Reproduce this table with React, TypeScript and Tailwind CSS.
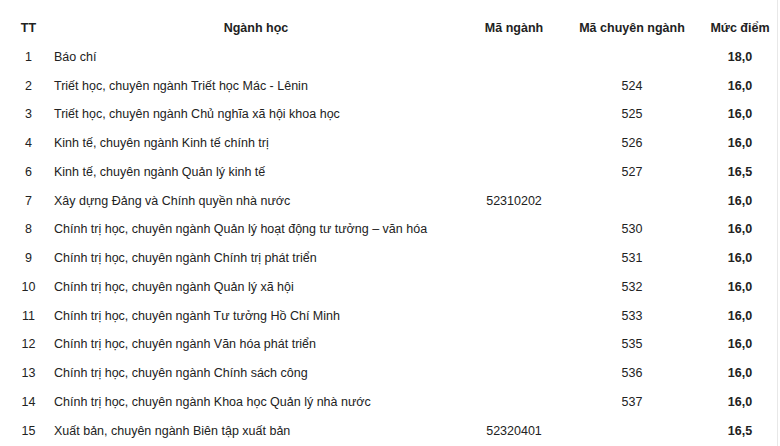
const rows: [string, string, string, string, string][] = [
  ['1', 'Báo chí', '', '', '18,0'],
  ['2', 'Triết học, chuyên ngành Triết học Mác - Lênin', '', '524', '16,0'],
  ['3', 'Triết học, chuyên ngành Chủ nghĩa xã hội khoa học', '', '525', '16,0'],
  ['4', 'Kinh tế, chuyên ngành Kinh tế chính trị', '', '526', '16,0'],
  ['6', 'Kinh tế, chuyên ngành Quản lý kinh tế', '', '527', '16,5'],
  ['7', 'Xây dựng Đảng và Chính quyền nhà nước', '52310202', '', '16,0'],
  ['8', 'Chính trị học, chuyên ngành Quản lý hoạt động tư tưởng – văn hóa', '', '530', '16,0'],
  ['9', 'Chính trị học, chuyên ngành Chính trị phát triển', '', '531', '16,0'],
  ['10', 'Chính trị học, chuyên ngành Quản lý xã hội', '', '532', '16,0'],
  ['11', 'Chính trị học, chuyên ngành Tư tưởng Hồ Chí Minh', '', '533', '16,0'],
  ['12', 'Chính trị học, chuyên ngành Văn hóa phát triển', '', '535', '16,0'],
  ['13', 'Chính trị học, chuyên ngành Chính sách công', '', '536', '16,0'],
  ['14', 'Chính trị học, chuyên ngành Khoa học Quản lý nhà nước', '', '537', '16,0'],
  ['15', 'Xuất bản, chuyên ngành Biên tập xuất bản', '52320401', '', '16,5'],
];

export default function App() {
  return (
    <div className="w-[780px] h-[446px] overflow-hidden bg-white font-['Liberation_Sans',Arial,sans-serif] text-[12.5px] text-[#222]">
      <div className="w-[778px] h-full border-r border-[#e8e8e8] pt-[14px]">
        <table className="table-fixed border-collapse w-[777px]">
          <colgroup>
            <col className="w-[49px]" />
            <col className="w-[414px]" />
            <col className="w-[102px]" />
            <col className="w-[134px]" />
            <col className="w-[78px]" />
          </colgroup>
          <thead>
            <tr className="h-[28.75px] font-bold">
              <th className="pl-2 text-center p-0">TT</th>
              <th className="text-center p-0">Ngành học</th>
              <th className="text-center p-0">Mã ngành</th>
              <th className="text-center p-0">Mã chuyên ngành</th>
              <th className="pl-1 text-center p-0">Mức điểm</th>
            </tr>
          </thead>
          <tbody>
            {rows.map((r) => (
              <tr key={r[0]} className="h-[28.75px]">
                <td className="pl-2 text-center p-0">{r[0]}</td>
                <td className="pl-[5px] text-left p-0 whitespace-nowrap">{r[1]}</td>
                <td className="text-center p-0">{r[2]}</td>
                <td className="text-center p-0">{r[3]}</td>
                <td className="pl-1 text-center p-0 font-bold">{r[4]}</td>
              </tr>
            ))}
          </tbody>
        </table>
      </div>
    </div>
  );
}
